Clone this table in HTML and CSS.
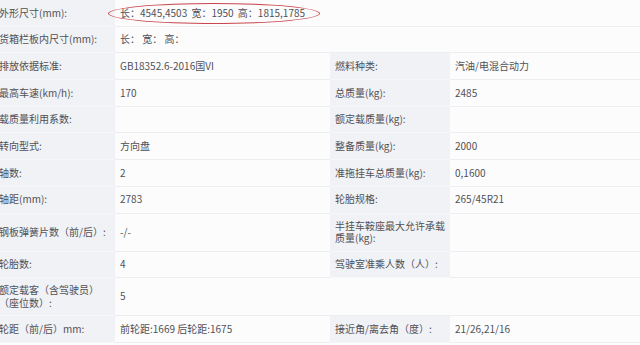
FILE: index.html
```html
<!DOCTYPE html>
<html lang="zh">
<head>
<meta charset="utf-8">
<link rel="stylesheet" href="styles.css">
</head>
<body>
<div class="sheet">
  <div class="grid">
    <div class="lb">外形尺寸(mm):</div>
    <div class="vl span3"><span class="marked">长：4545,4503 宽：1950 高：1815,1785<span class="ring"></span></span></div>

    <div class="lb">货箱栏板内尺寸(mm):</div>
    <div class="vl span3">长：&nbsp;宽：&nbsp;高：</div>

    <div class="lb">排放依据标准:</div>
    <div class="vl">GB18352.6-2016国VI</div>
    <div class="lb">燃料种类:</div>
    <div class="vl">汽油/电混合动力</div>

    <div class="lb">最高车速(km/h):</div>
    <div class="vl">170</div>
    <div class="lb">总质量(kg):</div>
    <div class="vl">2485</div>

    <div class="lb">载质量利用系数:</div>
    <div class="vl"></div>
    <div class="lb">额定载质量(kg):</div>
    <div class="vl"></div>

    <div class="lb">转向型式:</div>
    <div class="vl">方向盘</div>
    <div class="lb">整备质量(kg):</div>
    <div class="vl">2000</div>

    <div class="lb">轴数:</div>
    <div class="vl">2</div>
    <div class="lb">准拖挂车总质量(kg):</div>
    <div class="vl">0,1600</div>

    <div class="lb">轴距(mm):</div>
    <div class="vl">2783</div>
    <div class="lb">轮胎规格:</div>
    <div class="vl">265/45R21</div>

    <div class="lb">钢板弹簧片数（前/后）:</div>
    <div class="vl">-/-</div>
    <div class="lb">半挂车鞍座最大允许承载质量(kg):</div>
    <div class="vl"></div>

    <div class="lb">轮胎数:</div>
    <div class="vl">4</div>
    <div class="lb">驾驶室准乘人数（人）:</div>
    <div class="vl"></div>

    <div class="lb">额定载客（含驾驶员）（座位数）:</div>
    <div class="vl span3">5</div>

    <div class="lb">轮距（前/后）mm:</div>
    <div class="vl">前轮距:1669 后轮距:1675</div>
    <div class="lb">接近角/离去角（度）:</div>
    <div class="vl">21/26,21/16</div>
  </div>
</div>
</body>
</html>
```

FILE: styles.css
```css
html, body {
  margin: 0;
  padding: 0;
  background: #fcfcfd;
}

.sheet {
  width: 640px;
  height: 345px;
  overflow: hidden;
  font-family: "Noto Sans CJK SC", "Noto Sans", sans-serif;
  font-size: 10px;
  color: #505056;
}

.grid {
  margin-left: -6px;
  width: 646px;
  display: grid;
  grid-template-columns: 121px 215px 120px 190px;
  grid-auto-rows: minmax(26.7px, auto);
}

.lb, .vl {
  box-sizing: border-box;
  display: flex;
  align-items: center;
  padding: 6px 5px;
  line-height: 12.5px;
  border-bottom: 1px solid #eceef2;
  min-width: 0;
}

.lb {
  background: #f1f2f5;
  border-bottom-color: #f6f7f9;
}

.vl {
  background: #fcfcfd;
}

.span3 {
  grid-column: span 3;
}

.marked {
  position: relative;
  display: inline-block;
  white-space: nowrap;
  word-spacing: 2px;
}

.ring {
  position: absolute;
  left: -12px;
  right: -15px;
  top: -4px;
  bottom: -4.5px;
  box-sizing: border-box;
  border: 1.3px solid #c9464c;
  border-radius: 50%;
  pointer-events: none;
}
```
